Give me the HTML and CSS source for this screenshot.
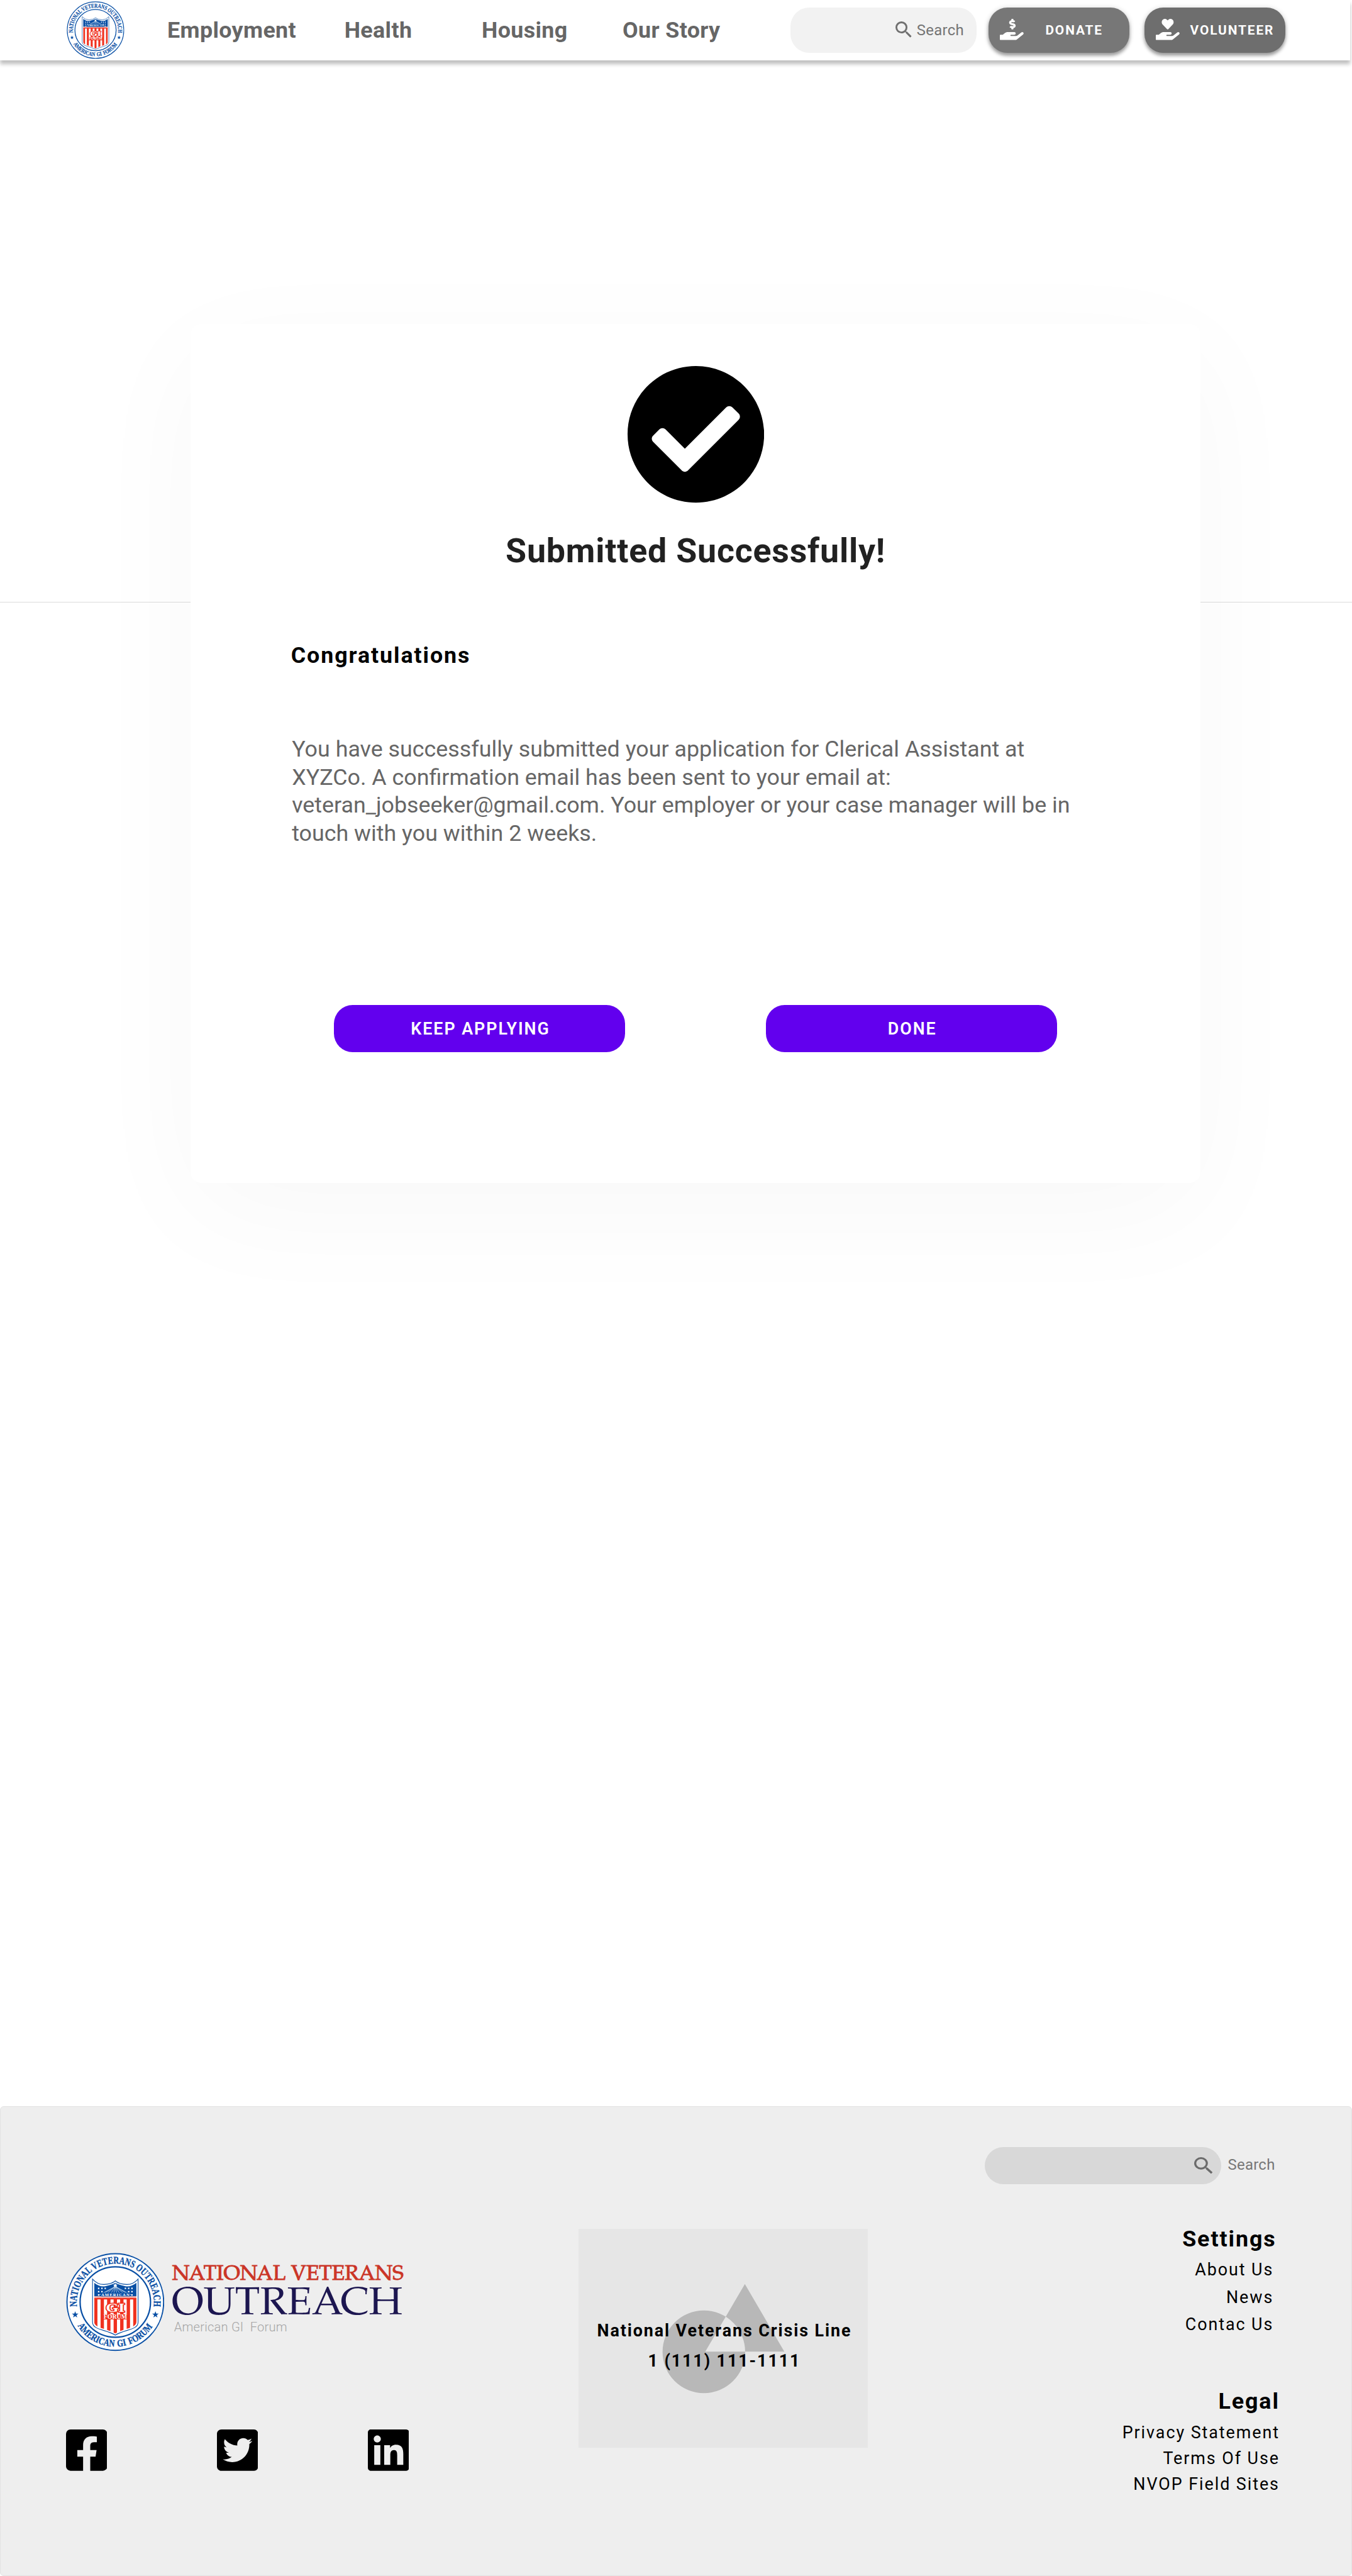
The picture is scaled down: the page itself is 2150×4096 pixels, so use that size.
FILE: index.html
```html
<!DOCTYPE html>
<html lang="en">
<head>
<meta charset="utf-8">
<title>National Veterans Outreach - Application Submitted</title>
<link rel="stylesheet" href="styles.css">
</head>
<body>
<svg class="defs" aria-hidden="true">
  <defs>
    <clipPath id="shield-clip"><path d="M-45-41Q-33-31-20-34Q-6-37 0-41Q6-37 20-34Q33-31 45-41V42C45 56 20 55 0 67C-20 55-45 56-45 42Z"/></clipPath>
    <path id="arc-top" d="M-81.700 9.500A82.200 82.200 0 1 1 81.700 9.500"/>
    <path id="arc-bottom" d="M-80.500 50.500A95 95 0 0 0 80.500 50.500"/>
    <path id="star" d="M0-7.500L1.800-2.400H7L2.800.9 4.400 6 0 2.900-4.400 6-2.800.9-7-2.400H-1.800Z"/>
    <symbol id="seal" viewBox="-105 -105 210 210">
      <circle r="104.500" fill="#fff"/>
      <circle r="103" fill="none" stroke="#0a50a5" stroke-width="2.600"/>
      <circle r="75" fill="none" stroke="#0a50a5" stroke-width="3"/>
      <g fill="#0a50a5" stroke="#0a50a5" stroke-width=".5" font-family="'Liberation Serif', serif" font-weight="700" font-size="22">
        <text><textPath href="#arc-top" textLength="276" lengthAdjust="spacingAndGlyphs">NATIONAL VETERANS OUTREACH</textPath></text>
        <text font-size="21" word-spacing="3"><textPath href="#arc-bottom" textLength="190" lengthAdjust="spacingAndGlyphs">AMERICAN GI FORUM</textPath></text>
      </g>
      <use href="#star" x="-85.500" y="27" fill="#0a50a5"/>
      <use href="#star" x="85.500" y="27" fill="#0a50a5"/>
      <path d="M-48.500-49Q-38-37-24-37.500Q-8-38 0-45Q8-38 24-37.500Q38-37 48.500-49V43C48.500 60 20 58 0 70.500C-20 58-48.500 60-48.500 43Z" fill="#fff" stroke="#0a50a5" stroke-width="1.500"/>
      <g clip-path="url(#shield-clip)">
        <rect x="-46" y="-45" width="92" height="33" fill="#0a50a5"/>
        <rect x="-46" y="-12" width="92" height="4" fill="#f5a9a2"/>
        <rect x="-46" y="-8" width="92" height="80" fill="#fff"/>
        <path d="M0-8V70M-13.900-8V70M13.900-8V70M-27.800-8V70M27.800-8V70M-41.700-8V70M41.700-8V70" stroke="#f0311f" stroke-width="7.200"/>
        <path d="M-46-7H46" stroke="#f0311f" stroke-width="3"/>
        <path d="M0-33L-34-15M0-33L-25-18M0-33L-17-19M0-33L-9-19M0-33L-3-19M0-33L3-19M0-33L9-19M0-33L17-19M0-33L25-18M0-33L34-15" stroke="#cfe0f2" stroke-width="1"/>
        <path d="M-37-29h3M-30-29h3M-23-29h3M-37-22h3M-30-22h3M-37-15h3M34-29h3M27-29h3M20-29h3M34-22h3M27-22h3M34-15h3" stroke="#fff" stroke-width="3"/>
        <rect x="-31" y="-20" width="62" height="8" fill="#0a50a5"/>
        <rect x="-27" y="26" width="54" height="11" fill="#f0311f"/>
      </g>
      <path d="M0-40l1.500 3h3l-2 2 1 3-3.500-1.500-3.500 1.500 1-3-2-2h3z" fill="#fff"/>
      <g font-family="'Liberation Serif', serif" font-weight="700" text-anchor="middle" fill="#fff">
        <text y="-12.800" font-size="9" textLength="60">AMERICAN</text>
        <text y="21" font-size="26" stroke="#f0311f" stroke-width="4" paint-order="stroke" textLength="40" lengthAdjust="spacingAndGlyphs">GI</text>
        <text y="35.500" font-size="12.500" textLength="50" lengthAdjust="spacingAndGlyphs">FORUM</text>
      </g>
    </symbol>
    <symbol id="search" viewBox="3 3 17.490 17.490" preserveAspectRatio="none">
      <path d="M15.500 14h-.79l-.28-.27A6.471 6.471 0 0 0 16 9.500 6.500 6.500 0 1 0 9.500 16c1.610 0 3.090-.59 4.230-1.570l.27.28v.79l5 4.990L20.490 19l-4.990-5zm-6 0C7.010 14 5 11.990 5 9.500S7.010 5 9.500 5 14 7.010 14 9.500 11.990 14 9.500 14z"/>
    </symbol>
    <path id="hand" d="M565.300 328.100c-11.800-10.700-30.200-10-42.600 0L430.300 402c-11.300 9.100-25.400 14-40 14H272c-8.800 0-16-7.200-16-16s7.200-16 16-16h78.300c15.900 0 30.700-10.900 33.300-26.600 3.300-20-12.100-37.400-31.600-37.400H192c-27 0-53.100 9.300-74.100 26.300L71.400 384H16c-8.800 0-16 7.200-16 16v96c0 8.800 7.200 16 16 16h356.800c14.500 0 28.600-4.900 40-14L564 377c15.200-12.100 16.400-35.300 1.300-48.900z"/>
  </defs>
</svg>

<header class="header">
  <svg class="header-logo" role="img" aria-label="National Veterans Outreach"><use href="#seal"/></svg>
  <nav class="nav">
    <a>Employment</a><a>Health</a><a>Housing</a><a>Our Story</a>
  </nav>
  <div class="search">
    <svg class="search-icon"><use href="#search"/></svg>
    <span>Search</span>
  </div>
  <a class="action donate">
    <svg class="action-icon" viewBox="0 0 576 512"><use href="#hand"/><path d="M271.060,144.300l54.270,14.300a8.590,8.590,0,0,1,6.630,8.100c0,4.600-4.090,8.400-9.120,8.400h-35.600a30,30,0,0,1-11.190-2.200c-5.240-2.200-11.280-1.700-15.300,2l-19,17.500a11.680,11.680,0,0,0-2.250,2.660,11.420,11.420,0,0,0,3.880,15.740,83.770,83.770,0,0,0,34.510,11.500V240c0,8.800,7.830,16,17.370,16h17.370c9.550,0,17.380-7.200,17.380-16V222.400c32.930-3.600,57.840-31,53.500-63-3.150-23-22.460-41.300-46.560-47.700L282.680,97.400a8.590,8.590,0,0,1-6.630-8.100c0-4.600,4.090-8.400,9.120-8.400h35.600A30,30,0,0,1,332,83.100c5.230,2.200,11.280,1.700,15.300-2l19-17.500A11.310,11.310,0,0,0,368.470,61a11.430,11.430,0,0,0-3.840-15.780,83.820,83.820,0,0,0-34.520-11.500V16c0-8.800-7.820-16-17.370-16H295.370C285.820,0,278,7.200,278,16V33.600c-32.890,3.600-57.850,31-53.510,63C227.630,119.600,247,137.900,271.060,144.300Z"/></svg>
    <span>DONATE</span>
  </a>
  <a class="action volunteer">
    <svg class="action-icon" viewBox="0 0 576 512"><use href="#hand"/><path d="M275.300 250.500c7 7.400 18.400 7.400 25.500 0l108.900-114.200c31.600-33.200 29.800-88.200-5.600-118.800-30.800-26.700-76.700-21.900-104.900 7.700L288 36.900l-11.100-11.600C248.700-4.400 202.800-9.200 172 17.500c-35.300 30.600-37.200 85.600-5.600 118.800l108.900 114.200z"/></svg>
    <span>VOLUNTEER</span>
  </a>
</header>

<main class="main">
  <section class="card">
    <svg class="check" viewBox="8 8 496 496"><path d="M504 256c0 136.967-111.033 248-248 248S8 392.967 8 256 119.033 8 256 8s248 111.033 248 248zM227.314 387.314l184-184c6.248-6.248 6.248-16.379 0-22.627l-22.627-22.627c-6.248-6.249-16.379-6.249-22.628 0L216 308.118l-70.059-70.059c-6.248-6.248-16.379-6.248-22.628 0l-22.627 22.627c-6.248 6.248-6.248 16.379 0 22.627l104 104c6.249 6.249 16.379 6.249 22.628.001z"/></svg>
    <h1 class="title">Submitted Successfully!</h1>
    <h2 class="subtitle">Congratulations</h2>
    <p class="message">You have successfully submitted your application for Clerical Assistant at XYZCo. A confirmation email has been sent to your email at: veteran_jobseeker@gmail.com. Your employer or your case manager will be in touch with you within 2 weeks.</p>
    <div class="buttons">
      <a class="button">KEEP APPLYING</a>
      <a class="button">DONE</a>
    </div>
  </section>
</main>

<footer class="footer">
  <div class="brand">
    <div class="brand-row">
      <svg class="brand-seal"><use href="#seal"/></svg>
      <svg class="wordmark" viewBox="0 0 500 210">
        <g font-family="'TeX Gyre Pagella', 'Liberation Serif', serif">
          <text class="wm-red" x="1" y="57" textLength="493" lengthAdjust="spacingAndGlyphs">NATIONAL VETERANS</text>
          <text class="wm-navy" x="0" y="131" textLength="492" lengthAdjust="spacingAndGlyphs">OUTREACH</text>
        </g>
        <text class="wm-sub" x="5" y="168" textLength="241" xml:space="preserve">American GI  Forum</text>
      </svg>
    </div>
    <div class="social">
      <svg viewBox="0 32 448 448"><path d="M400 32H48A48 48 0 0 0 0 80v352a48 48 0 0 0 48 48h137.250V327.690h-63V256h63v-54.640c0-62.150 37-96.480 93.670-96.480 27.140 0 55.520 4.840 55.520 4.840v61h-31.270c-30.810 0-40.420 19.120-40.420 38.730V256h68.780l-11 71.690h-57.780V480H400a48 48 0 0 0 48-48V80a48 48 0 0 0-48-48z"/></svg>
      <svg viewBox="0 32 448 448"><path d="M400 32H48C21.500 32 0 53.500 0 80v352c0 26.500 21.500 48 48 48h352c26.500 0 48-21.500 48-48V80c0-26.500-21.500-48-48-48zm-48.900 158.800c.2 2.800.2 5.700.2 8.500 0 86.700-66 186.600-186.600 186.600-37.200 0-71.700-10.800-100.700-29.400 5.300.6 10.400.8 15.800.8 30.700 0 58.900-10.400 81.400-28-28.800-.6-53-19.500-61.300-45.500 10.100 1.500 19.200 1.500 29.600-1.200-30-6.100-52.500-32.500-52.500-64.400v-.8c8.700 4.900 18.900 7.900 29.600 8.300a65.447 65.447 0 0 1-29.200-54.600c0-12.200 3.200-23.400 8.900-33.100 32.300 39.800 80.800 65.800 135.200 68.600-9.300-44.500 24-80.600 64-80.600 18.900 0 35.900 7.900 47.900 20.700 14.800-2.800 29-8.300 41.600-15.800-4.900 15.200-15.200 28-28.800 36.100 13.200-1.400 26-5.100 37.800-10.200-8.900 13.100-20.100 24.700-32.900 34z"/></svg>
      <svg viewBox="0 32 448 448"><path d="M416 32H31.900C14.300 32 0 46.500 0 64.300v383.400C0 465.500 14.300 480 31.900 480H416c17.600 0 32-14.500 32-32.300V64.300c0-17.800-14.400-32.300-32-32.300zM135.400 416H69V202.200h66.500V416zm-33.200-243c-21.300 0-38.500-17.300-38.500-38.500S80.900 96 102.200 96c21.200 0 38.500 17.300 38.500 38.500 0 21.300-17.200 38.500-38.500 38.500zm282.100 243h-66.400V312c0-24.800-.5-56.700-34.500-56.700-34.600 0-39.900 27-39.900 54.900V416h-66.400V202.200h63.700v29.200h.9c8.900-16.800 30.600-34.500 62.900-34.500 67.200 0 79.700 44.300 79.700 101.900V416z"/></svg>
    </div>
  </div>

  <div class="crisis">
    <svg class="crisis-art" viewBox="0 0 616 466"><path fill-rule="evenodd" d="M354.400 117.700L438.500 261.500H270ZM179 262a88 88 0 1 0 176 0a88 88 0 1 0-176 0Z"/></svg>
    <p>National Veterans Crisis Line</p>
    <p>1 (111) 111-1111</p>
  </div>

  <div class="links">
    <div class="footer-search">
      <div class="footer-pill"><svg class="footer-search-icon"><use href="#search"/></svg></div>
      <span>Search</span>
    </div>
    <div class="group settings">
      <h3>Settings</h3>
      <a>About Us</a><a>News</a><a>Contac Us</a>
    </div>
    <div class="group legal">
      <h3>Legal</h3>
      <a>Privacy Statement</a><a>Terms Of Use</a><a>NVOP Field Sites</a>
    </div>
  </div>
</footer>
</body>
</html>
```
FILE: styles.css
```css
html {
  font-size: 14.928px;
}

*,
*::before {
  box-sizing: border-box;
}

body {
  margin: 0;
  background: #fff;
  color: #000;
  font-family: Roboto, sans-serif;
  width: 2150px;
  height: 4096px;
  display: flex;
  flex-direction: column;
  overflow: hidden;
}

h1, h2, h3, p {
  margin: 0;
}

svg {
  display: block;
}

.defs {
  position: absolute;
  width: 0;
  height: 0;
}

/* Header */
.header {
  display: flex;
  align-items: flex-start;
  flex: none;
  width: 143.8rem;
  height: 6.4rem;
  background: #fff;
  box-shadow: 0 .4rem .4rem rgba(0, 0, 0, .25);
  position: relative;
  z-index: 1;
}

.header-logo {
  flex: none;
  width: 6.15rem;
  height: 6.15rem;
  margin: .12rem 0 0 7.13rem;
}

.nav {
  display: grid;
  grid-template-columns: 18.87rem 14.63rem 15rem 17.9rem;
  margin-left: 4.54rem;
  padding-top: 1.71rem;
}

.nav a {
  font-weight: 700;
  font-size: 2.4rem;
  line-height: 3rem;
  letter-spacing: .025rem;
  color: #666;
}

.search {
  display: flex;
  flex: none;
  width: 19.8rem;
  height: 4.8rem;
  margin-top: .8rem;
  padding: 1.5rem 0 0 11.2rem;
  border-radius: 2rem;
  background: #f2f2f2;
}

.search-icon {
  width: 1.72rem;
  height: 1.72rem;
  fill: #707070;
}

.search span {
  margin: -.24rem 0 0 .52rem;
  font-size: 1.6rem;
  line-height: 2.4rem;
  letter-spacing: .02rem;
  color: #757575;
}

.action {
  display: flex;
  flex: none;
  width: 15rem;
  height: 4.8rem;
  margin: .8rem 0 0 1.3rem;
  padding: 1.22rem 0 0 1.2rem;
  border-radius: 2rem;
  color: #fff;
  box-shadow: 0 .3rem .35rem rgba(0, 0, 0, .3), 0 .1rem .6rem rgba(0, 0, 0, .2);
}

.donate {
  background: #777;
}

.volunteer {
  margin-left: 1.6rem;
  background: #6e6e6e;
}

.action-icon {
  width: 2.53rem;
  height: 2.25rem;
  fill: #fff;
}

.action span {
  font-size: 1.4rem;
  font-weight: 700;
  line-height: 2rem;
  letter-spacing: .125rem;
  padding-top: .24rem;
}

.donate span {
  margin-left: 2.32rem;
}

.volunteer span {
  margin-left: 1.14rem;
}

/* Confirmation */
.main {
  flex: 1;
  padding: 28.1rem 0 0 20.3rem;
  background: linear-gradient(#dcdcdc, #dcdcdc) 0 861.46px / 100% 1px no-repeat;
}

.card {
  width: 107.6rem;
  height: 91.5rem;
  padding: 4.52rem 10.7rem 0;
  border-radius: 1.2rem;
  background: #fff;
  box-shadow: 0 3.2rem 13rem rgba(0, 0, 0, .032);
}

.check {
  width: 14.55rem;
  height: 14.55rem;
  margin: 0 auto;
}

.title {
  margin-top: 3.05rem;
  font-size: 3.6rem;
  line-height: 4.2rem;
  letter-spacing: .053rem;
  text-align: center;
  color: #212121;
}

.subtitle {
  margin-top: 7.5rem;
  font-size: 2.4rem;
  line-height: 3rem;
  letter-spacing: .128rem;
}

.message {
  width: 84.5rem;
  margin: 6.98rem 0 0 .1rem;
  font-size: 2.4rem;
  line-height: 3rem;
  color: #666;
}

.buttons {
  display: flex;
  gap: 15rem;
  margin: 16.77rem 0 0 4.6rem;
}

.button {
  width: 31rem;
  height: 5rem;
  padding: .04rem 0 0 .17rem;
  border-radius: 2rem;
  background: #6200ee;
  color: #fff;
  font-size: 1.8rem;
  font-weight: 600;
  line-height: 5rem;
  letter-spacing: .13rem;
  text-align: center;
}

/* Footer */
.footer {
  display: flex;
  flex: none;
  width: 100%;
  height: 50.05rem;
  border: 1.5px solid #e2e2e2;
  border-radius: .4rem;
  background: #eee;
}

.brand {
  width: 54.6rem;
  padding: 15.57rem 0 0 6.95rem;
}

.brand-row {
  display: flex;
}

.brand-seal {
  width: 10.5rem;
  height: 10.5rem;
}

.wordmark {
  width: 25rem;
  height: 10.5rem;
  margin-left: .8rem;
  overflow: visible;
}

.wm-red {
  font-size: 45px;
  fill: #cb3527;
  stroke: #cb3527;
  stroke-width: 1.3px;
}

.wm-navy {
  font-size: 83px;
  fill: #1c1650;
}

.wm-sub {
  font-family: Roboto, sans-serif;
  font-size: 27px;
  font-weight: 300;
  fill: #a6a6a6;
  white-space: pre;
}

.social {
  display: flex;
  gap: 11.68rem;
  margin-top: 8.3rem;
}

.social svg {
  width: 4.4rem;
  height: 4.4rem;
}

.crisis {
  position: relative;
  width: 30.8rem;
  height: 23.3rem;
  margin: 13rem 0 0 6.95rem;
  padding: 9.33rem 0 0 .3rem;
  background: #e6e6e6;
}

.crisis-art {
  position: absolute;
  inset: 0;
  width: 100%;
  height: 100%;
  fill: #b8b8b8;
}

.crisis p {
  position: relative;
  font-size: 1.8rem;
  font-weight: 700;
  line-height: 3.2rem;
  letter-spacing: .128rem;
  text-align: center;
}

.links {
  margin-left: 12.5rem;
  padding-top: 4.3rem;
  width: 31.5rem;
}

.footer-search {
  display: flex;
}

.footer-pill {
  width: 25.2rem;
  height: 3.95rem;
  padding: 1.08rem 0 0 22.3rem;
  border-radius: 2rem;
  background: #d8d8d8;
}

.footer-search-icon {
  width: 1.97rem;
  height: 1.77rem;
  fill: #6b6b6b;
}

.footer-search span {
  margin-left: .68rem;
  font-size: 1.6rem;
  line-height: 3.88rem;
  letter-spacing: .02rem;
  color: #777;
}

.group {
  display: flex;
  flex-direction: column;
  text-align: right;
}

.group h3 {
  font-size: 2.4rem;
  line-height: 2.8rem;
  letter-spacing: .13rem;
}

.group a {
  font-size: 1.8rem;
  letter-spacing: .13rem;
}

.settings {
  margin-top: 4.47rem;
}

.settings h3 {
  margin: 0 .45rem .45rem 0;
}

.settings a {
  margin-right: .75rem;
  line-height: 2.9rem;
}

.legal {
  margin-top: 5.35rem;
}

.legal h3 {
  margin: 0 .1rem .52rem 0;
}

.legal a {
  margin-right: .1rem;
  line-height: 2.775rem;
}
```
